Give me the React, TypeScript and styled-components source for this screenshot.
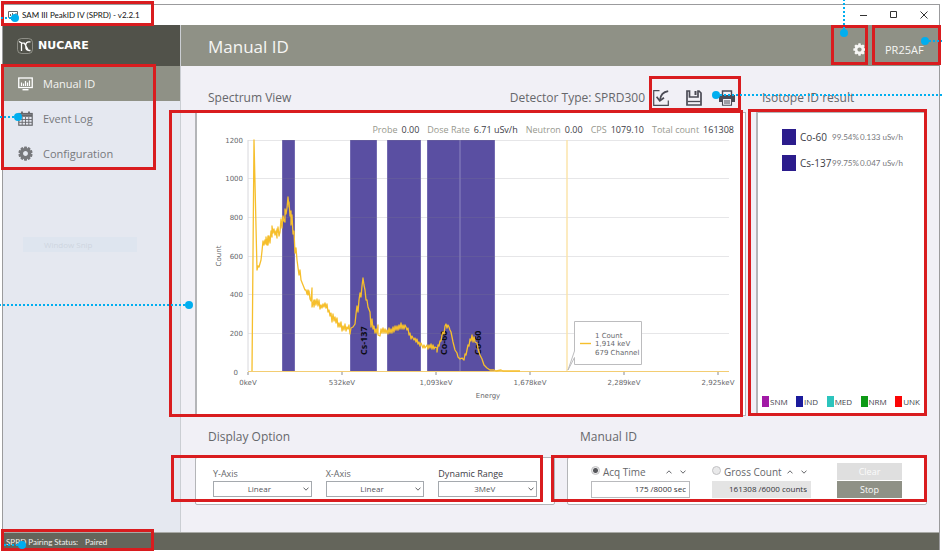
import React from "react";
import styled, { createGlobalStyle, css } from "styled-components";

const color = {
  olive: "#8f9186",
  oliveDark: "#51524a",
  status: "#64655b",
  side: "#e5e8f0",
  main: "#f1f0f6",
  text: "#66676b",
  dark: "#3c3c46",
  line: "#b4b5b8",
  band: "#5a4fa2",
  curve: "#f6bf2c",
  red: "#d91c1f",
  blue: "#00aeef",
};

const GlobalStyle = createGlobalStyle`
  *, *::before, *::after { box-sizing: border-box; }
  body { margin: 0; background: #fff; }
  body, button, input, select {
    font-family: "Open Sans", "Noto Sans", sans-serif;
  }
  button { border: 0; padding: 0; background: none; color: inherit; cursor: pointer; }
  h1, h2, p { margin: 0; font-weight: 400; }
`;

/* ---------- annotations ---------- */

const Frame = styled.div<{ $inset: string }>`
  position: absolute;
  inset: ${(p) => p.$inset};
  border: 3px solid ${color.red};
  pointer-events: none;
  z-index: 2;
`;

type Dir = "left" | "right" | "up";

const leader = {
  left: css<{ $len: number }>`
    right: 4px; top: 3px; width: ${(p) => p.$len}px; height: 2px;
    background: repeating-linear-gradient(to left, ${color.blue} 0 2px, transparent 2px 4px);
  `,
  right: css<{ $len: number }>`
    left: 4px; top: 3px; width: ${(p) => p.$len}px; height: 2px;
    background: repeating-linear-gradient(to right, ${color.blue} 0 2px, transparent 2px 4px);
  `,
  up: css<{ $len: number }>`
    left: 3px; bottom: 4px; height: ${(p) => p.$len}px; width: 2px;
    background: repeating-linear-gradient(to top, ${color.blue} 0 2px, transparent 2px 4px);
  `,
};

const Pin = styled.span<{ $at: string; $dir: Dir; $len: number }>`
  position: absolute;
  inset: ${(p) => p.$at};
  width: 8px;
  height: 8px;
  border-radius: 50%;
  background: ${color.blue};
  pointer-events: none;
  z-index: 3;
  &::after {
    content: "";
    position: absolute;
    ${(p) => leader[p.$dir]}
  }
`;

/* ---------- window ---------- */

const Page = styled.div`
  display: flex;
  min-height: 100vh;
  padding: 4px 2px 1px;
  overflow: clip;
`;

const Window = styled.div`
  flex: 1;
  min-width: 0;
  display: flex;
  flex-direction: column;
  border: 1px solid #9b9b9d;
  border-bottom: 0;
`;

const TitleBar = styled.header`
  display: flex;
  justify-content: space-between;
  height: 20px;
  background: #fff;
`;

const AppTitle = styled.div`
  position: relative;
  display: flex;
  align-items: center;
  gap: 4px;
  width: 151px;
  padding-left: 5px;
  font-family: Lato, "Open Sans", sans-serif;
  font-size: 8px;
  color: #111;
  white-space: nowrap;
`;

const WindowControls = styled.div`
  display: flex;
`;

const WindowButton = styled.button`
  display: grid;
  place-items: center;
  width: 30px;
`;

const Shell = styled.div`
  flex: 1;
  display: flex;
`;

const Sidebar = styled.aside`
  flex: none;
  width: 178px;
  border-right: 1px solid #cbced3;
  background: ${color.side};
`;

const Brand = styled.div`
  display: flex;
  align-items: center;
  gap: 5px;
  height: 41px;
  padding-left: 14px;
  background: ${color.oliveDark};
  color: #fff;
  font: bold 11px "DejaVu Sans", sans-serif;
`;

const Nav = styled.nav`
  position: relative;
  display: flex;
  flex-direction: column;
`;

const NavLink = styled.a<{ $active?: boolean }>`
  display: flex;
  align-items: center;
  gap: 10px;
  height: 35px;
  padding-left: 15px;
  font-size: 11px;
  text-decoration: none;
  color: ${(p) => (p.$active ? "#f4f4f2" : "#77787c")};
  background: ${(p) => (p.$active ? color.olive : "transparent")};
`;

const SnipGhost = styled.div`
  margin: 66px 43px 0 20px;
  padding-left: 21px;
  background: #dee5ef;
  color: #ced5df;
  font-size: 8px;
  line-height: 15px;
`;

const Main = styled.main`
  flex: 1;
  min-width: 0;
  display: flex;
  flex-direction: column;
  background: ${color.main};
`;

const Header = styled.div`
  display: flex;
  height: 41px;
  padding-left: 27px;
  background: ${color.olive};
  color: #f6f6f4;
`;

const PageTitle = styled.h1`
  flex: 1;
  align-self: center;
  padding-top: 2px;
  font-size: 17px;
  line-height: 24px;
`;

const HeaderButton = styled.button<{ $kind: "icon" | "user" }>`
  position: relative;
  display: flex;
  align-items: center;
  padding-top: 8px;
  font-size: 11px;
  ${(p) =>
    p.$kind === "icon"
      ? css`
          width: 37px;
          justify-content: flex-end;
          padding-right: 2px;
        `
      : css`
          width: 67px;
          margin-left: 4px;
          padding-left: 13px;
        `}
`;

const Content = styled.div`
  flex: 1;
  display: flex;
  flex-direction: column;
  padding: 0 12px 27px 14px;
`;

const UpperRow = styled.div`
  flex: 1;
  display: grid;
  grid-template-columns: minmax(0, 1fr) 171px;
  gap: 10px;
`;

const LowerRow = styled.div`
  display: grid;
  grid-template-columns: repeat(2, minmax(0, 1fr));
  gap: 12px;
`;

const Section = styled.section`
  display: flex;
  flex-direction: column;
`;

const SectionHead = styled.div<{ $size: "tall" | "short" }>`
  display: flex;
  align-items: center;
  height: ${(p) => (p.$size === "tall" ? 46 : 41)}px;
  padding: ${(p) => (p.$size === "tall" ? 17 : 0)}px 11px 0 13px;
  font-size: 12px;
  color: ${color.text};
  white-space: nowrap;
`;

const NarrowHead = styled(SectionHead)`
  padding-left: 6px;
`;

const Heading = styled.h2`
  flex: 1;
  font-size: 12px;
`;

const Toolbar = styled.div`
  position: relative;
  display: flex;
  align-items: center;
  gap: 17px;
  height: 29px;
  margin-left: 8px;
`;

const ToolButton = styled.button`
  display: grid;
  width: 16px;
  height: 16px;
  color: #4b4b55;
`;

const Panel = styled.div`
  position: relative;
  flex: 1;
  border: 1px solid ${color.line};
  border-left-width: 2px;
  background: #fff;
`;

const Metrics = styled.dl`
  display: flex;
  justify-content: flex-end;
  align-items: center;
  gap: 8px;
  height: 23px;
  margin: 0;
  padding: 9px 11px 0 0;
  font-size: 9px;
  white-space: nowrap;
`;

const Metric = styled.div`
  display: flex;
  gap: 4px;
  dt { color: #97988e; }
  dd { margin: 0; color: ${color.dark}; }
`;

const ChartSvg = styled.svg`
  display: block;
  width: 100%;
  height: auto;
  .axis { font: 7px "DejaVu Sans", Verdana, sans-serif; fill: #66676b; }
  .peak { font: bold 9px "Open Sans", sans-serif; fill: #0c0c14; }
`;

const ResultPanel = styled(Panel)`
  display: flex;
  flex-direction: column;
  justify-content: space-between;
`;

const ResultTable = styled.table`
  margin: 11px 0 0 24px;
  border-collapse: collapse;
  table-layout: fixed;
  width: 120px;
  color: #77787c;
  font-family: Lato, "Open Sans", sans-serif;
  font-size: 8px;
  td, th { height: 26px; padding: 0; font-weight: 400; white-space: nowrap; }
  td:first-child { width: 18px; }
  td:nth-child(3) { width: 28px; }
  td:last-child { width: 42px; text-align: right; }
`;

const IsotopeName = styled.th`
  text-align: left;
  color: ${color.dark};
  font-family: "Open Sans", sans-serif;
  font-size: 10px;
`;

const Swatch = styled.span<{ $color: string; $big?: boolean }>`
  display: block;
  width: ${(p) => (p.$big ? 14 : 7)}px;
  height: ${(p) => (p.$big ? 16 : 11)}px;
  background: ${(p) => p.$color};
`;

const Legend = styled.ul`
  display: flex;
  justify-content: space-between;
  margin: 0;
  padding: 0 6px 8px 4px;
  list-style: none;
  font-size: 8px;
  line-height: 11px;
  color: #44454c;
  li { display: flex; gap: 1px; }
`;

const OptionPanel = styled.div`
  position: relative;
  display: flex;
  height: 48px;
  border: 1px solid ${color.line};
  border-radius: 2px;
  background: #fff;
`;

const DisplayOptions = styled(OptionPanel)`
  gap: 14px;
  padding: 9px 17px 0 17px;
`;

const Field = styled.label<{ $strong?: boolean }>`
  display: flex;
  flex-direction: column;
  width: 99px;
  font-size: 9px;
  line-height: 14px;
  color: ${(p) => (p.$strong ? color.dark : color.text)};
`;

const SelectWrap = styled.span`
  display: grid;
  align-items: center;
  grid-template-columns: minmax(0, 1fr);
  > * { grid-area: 1 / 1; }
  svg { justify-self: end; margin-right: 3px; pointer-events: none; }
`;

const Select = styled.select`
  appearance: none;
  height: 16px;
  padding: 0 12px 1px 6px;
  border: 1px solid #a5a9ae;
  border-radius: 0;
  background: #fff;
  color: #55565c;
  font-size: 8px;
  text-align: center;
  text-align-last: center;
`;

const ManualOptions = styled(OptionPanel)`
  padding: 5px 24px 0 23px;
`;

const Limit = styled.div`
  width: 99px;
  margin-right: 22px;
`;

const LimitHead = styled.div`
  display: flex;
  align-items: center;
  height: 18px;
  font-size: 10px;
  color: ${color.text};
  white-space: nowrap;
  label { flex: 1; }
`;

const Radio = styled.input`
  appearance: none;
  width: 9px;
  height: 9px;
  margin: 0 3px 4px 0;
  border: 1px solid #c2c2c4;
  border-radius: 50%;
  background: #e9e9ea;
  &:checked {
    background: radial-gradient(circle, #55565a 0 2px, #e9e9ea 3px);
  }
`;

const StepButton = styled.button`
  display: grid;
  place-items: center;
  width: 14px;
  height: 14px;
  color: #55565c;
`;

const LimitInput = styled.input<{ $muted?: boolean }>`
  display: block;
  width: 100%;
  height: 17px;
  padding: 0 3px 2px;
  border: 1px solid ${(p) => (p.$muted ? "#e4e4e4" : "#b9babd")};
  background: ${(p) => (p.$muted ? "#e4e4e4" : "#fff")};
  color: #33343a;
  font-size: 8px;
  text-align: right;
`;

const Actions = styled.div`
  display: flex;
  flex-direction: column;
  gap: 1px;
  width: 65px;
  margin-left: auto;
`;

const ActionButton = styled.button<{ $tone: "idle" | "active" }>`
  height: 17px;
  background: ${(p) => (p.$tone === "idle" ? "#dfdfdf" : color.olive)};
  color: #fbfbfb;
  font-size: 9px;
  line-height: 12px;
`;

const StatusBar = styled.footer`
  height: 18px;
  border-top: 1px solid #a9aaa6;
  background: ${color.status};
`;

const StatusText = styled.p`
  position: relative;
  display: flex;
  align-items: center;
  gap: 7px;
  width: 151px;
  height: 17px;
  padding-left: 3px;
  font-family: Lato, "Open Sans", sans-serif;
  font-size: 8px;
  color: #f0f0ee;
  white-space: nowrap;
`;

/* ---------- icons ---------- */

const AppIcon = () => (
  <svg width="10" height="9" viewBox="0 0 10 9" fill="none" stroke="#66676b">
    <path d="M.5.5h9v6h-9zM3 8.5h4M2.5 5V3M4.5 5V2M6.5 5V3M8 5V2" />
  </svg>
);

const BrandMark = () => (
  <svg width="16" height="16" viewBox="0 0 16 16" fill="none" stroke="#fff">
    <rect x=".5" y=".5" width="15" height="15" rx="4" strokeWidth=".7" stroke="#a9a9a2" />
    <path d="M2 3.5 4.500 4.800V13M4.500 5.200h2.800L11.500 12.500M13.500 3.800h-1.500c-2.200 0-3.200 1-3.200 3.200v1.800c0 2.500 1.200 3.700 3.200 3.700h1.500" strokeWidth="1.3" />
  </svg>
);

const MonitorIcon = () => (
  <svg width="15" height="14" viewBox="0 0 15 14" fill="none" stroke="#fff">
    <rect x=".75" y="1" width="13.5" height="9.5" strokeWidth="1.3" />
    <path d="M3.5 9V5.5M5.5 9V6.5M7.5 9V4M9.5 9V5.5M11.5 9V3.5" strokeWidth="1.2" />
    <path d="M4.5 12.7h6" strokeWidth="1.4" />
  </svg>
);

const CalendarIcon = () => (
  <svg width="15" height="15" viewBox="0 0 15 15" fill="none" stroke="#66676b">
    <rect x=".8" y="2.5" width="13.4" height="11.7" strokeWidth="1.2" />
    <path d="M1 4.5h13" strokeWidth="2.6" />
    <path d="M4 .5V3M11 .5V3" strokeWidth="1.8" />
    <path d="M4.2 6v8M7.5 6v8M10.8 6v8M1 8.5h13M1 11.3h13" strokeWidth=".9" />
  </svg>
);

const Gear = ({ size, teeth }: { size: number; teeth: number }) => (
  <svg width={size} height={size} viewBox="-8 -8 16 16" fill="currentColor">
    <circle r="4.3" fill="none" stroke="currentColor" strokeWidth="3.4" />
    {Array.from({ length: teeth }, (_, i) => (
      <rect key={i} x="-1.6" y="-7.6" width="3.2" height="3" rx=".8" transform={`rotate(${(i * 360) / teeth})`} />
    ))}
  </svg>
);

const ImportIcon = () => (
  <svg width="16" height="16" viewBox="0 0 16 16" fill="none" stroke="currentColor">
    <path d="M6.500.7H.7v14.600h14.600V10.500" strokeWidth="1.2" />
    <path d="M15.200 1.200C10.500 2 7.500 5 7 10" strokeWidth="1.8" />
    <path d="M3.600 6.800 6.800 10.800l4.200-3" strokeWidth="1.700" />
  </svg>
);

const SaveIcon = () => (
  <svg width="16" height="16" viewBox="0 0 16 16" fill="none" stroke="currentColor">
    <path d="M1 1h2.500v6h8.500V1h1L15 3V15H1z" strokeWidth="1.700" />
    <path d="M1.500 11.500h13" strokeWidth="1.300" />
    <path d="M9.500 1v4" strokeWidth="2" />
  </svg>
);

const PrintIcon = () => (
  <svg width="16" height="16" viewBox="0 0 16 16" fill="none" stroke="currentColor">
    <path d="M3.5 5V1h9v4" strokeWidth="1.4" />
    <path d="M0 5h16v7h-3.5V9h-9v3H0z" fill="currentColor" stroke="none" />
    <path d="M3.5 9v6.2h9V9M5 11h6M5 13h6" strokeWidth="1.1" />
  </svg>
);

const Chevron = ({ up }: { up?: boolean }) => (
  <svg width="6" height="4" viewBox="0 0 6 4" fill="none" stroke="#66676b">
    <path d={up ? "M.5 3.4 3 .8l2.5 2.6" : "M.5.6 3 3.2 5.5.6"} />
  </svg>
);

/* ---------- chart ---------- */

const bands = [
  [282, 295],
  [350, 377],
  [387, 421],
  [427, 460],
  [460, 495],
];

const curve =
  "252,371 254,140 257,270 258,266 259,267 261,260 262,251 263,241 264,245 265,240 266,244 266,237 267,245 268,236 268,245 269,236 270,243 271,231 272,237 272,226 273,233 274,229 275,235 276,231 277,238 277,229 278,232 278,227 279,236 280,232 281,219 282,228 283,216 284,221 285,222 285,209 286,214 287,208 288,197 289,207 289,202 290,216 291,211 291,225 292,215 293,234 294,231 295,253 296,248 297,260 299,275 300,270 301,280 303,285 305,290 306,290 307,294 308,290 308,295 309,291 310,299 311,301 312,288 312,307 314,300 314,307 315,300 316,305 317,299 318,306 319,300 320,309 321,305 322,308 323,304 324,307 325,303 326,308 327,304 328,312 329,310 330,316 331,313 332,322 333,314 334,321 335,317 336,323 337,318 338,327 339,323 340,327 341,322 342,331 343,326 344,330 345,324 346,331 347,327 348,329 349,325 350,334 351,328 353,327 355,324 356,314 357,306 358,312 359,300 360,293 361,297 362,286 363,278 364,285 365,290 366,300 367,300 368,307 370,312 371,327 372,319 373,329 374,326 375,333 376,329 377,333 378,325 378,335 380,336 381,329 382,333 383,328 384,333 385,329 386,333 387,330 388,334 389,328 390,333 391,329 392,333 393,327 394,332 395,326 396,330 397,326 398,330 399,325 400,329 401,323 402,329 403,325 404,329 405,325 406,327 407,330 408,328 409,335 410,333 411,339 412,336 414,340 415,338 416,342 417,339 418,344 419,342 420,346 421,343 423,348 424,345 425,348 427,345 428,349 429,345 430,348 431,344 432,349 433,345 434,349 435,347 437,348 437,352 438,345 439,346 440,341 441,341 442,335 443,332 444,334 445,326 446,324 447,328 448,325 449,327 450,330 451,332 453,342 455,350 457,353 458,357 460,359 462,358 464,360 465,354 466,355 468,345 469,346 470,339 471,341 472,335 473,342 474,337 475,342 477,343 478,349 480,355 482,359 484,365 487,368 490,370 494,370 496,371 501,370 503,371 520,371";

const xTicks: [number, string][] = [
  [248, "0keV"],
  [342, "532keV"],
  [436, "1,093keV"],
  [530, "1,678keV"],
  [624, "2,289keV"],
  [718, "2,925keV"],
];

const yFor = (count: number) => Math.round(371.5 - (count / 1200) * 232);

const SpectrumChart = () => (
  <ChartSvg viewBox="197 136 548 279" role="img" aria-label="Energy spectrum">
    {bands.map(([a, b]) => (
      <g key={a}>
        <rect x={a} y="140" width={b - a} height="231" fill={color.band} />
        <path d={`M${a + 0.5} 140V371M${b - 0.5} 140V371`} stroke="#7e76b8" strokeOpacity=".7" />
      </g>
    ))}
    {[1200, 1000, 800, 600, 400, 200, 0].map((v) => (
      <g key={v}>
        {v > 0 && <path d={`M248 ${yFor(v) + 0.5}H729`} stroke="#80808a" strokeOpacity=".2" />}
        <text className="axis" x={v ? 243 : 238} y={yFor(v) + 3} textAnchor="end">
          {v}
        </text>
      </g>
    ))}
    <path d="M248 140V371" stroke="#d8d8dc" />
    {xTicks.map(([x, label]) => (
      <g key={label}>
        <path d={`M${x} 372v3`} stroke="#8a8a8e" />
        <text className="axis" x={x} y="385" textAnchor="middle">
          {label}
        </text>
      </g>
    ))}
    <text className="axis" x="488" y="398" textAnchor="middle">Energy</text>
    <text className="axis" transform="translate(221 256) rotate(-90)" textAnchor="middle">Count</text>
    <text className="peak" transform="translate(367 355) rotate(-90)">Cs-137</text>
    <text className="peak" transform="translate(447 355) rotate(-90)">Co-60</text>
    <text className="peak" transform="translate(481 355) rotate(-90)">Co-60</text>
    <path d="M567 140V371" stroke="#fbe3a6" strokeWidth="1.4" />
    <path d="M248 371.5H729" stroke="#f3cd72" />
    <polyline points={curve} fill="none" stroke={color.curve} strokeWidth="1.3" strokeLinejoin="round" />
    <path d="M574.5 321.5h67v43h-67v-7L568 370l6.5-19z" fill="#fff" stroke="#bcbcbe" />
    <path d="M580 343.5h11" stroke={color.curve} strokeWidth="1.4" />
    <text className="axis" x="595" y="338">1 Count</text>
    <text className="axis" x="595" y="346">1,914 keV</text>
    <text className="axis" x="595" y="355">679 Channel</text>
  </ChartSvg>
);

/* ---------- data ---------- */

const metrics = [
  ["Probe", "0.00"],
  ["Dose Rate", "6.71 uSv/h"],
  ["Neutron", "0.00"],
  ["CPS", "1079.10"],
  ["Total count", "161308"],
];

const results = [
  ["Co-60", "99.54%", "0.133 uSv/h"],
  ["Cs-137", "99.75%", "0.047 uSv/h"],
];

const legend = [
  ["SNM", "#a21aa6"],
  ["IND", "#1b1b9c"],
  ["MED", "#2cc4bd"],
  ["NRM", "#0e9a16"],
  ["UNK", "#fb0505"],
];

const selects = [
  ["Y-Axis", "Linear", "Logarithmic"],
  ["X-Axis", "Linear", "Square root"],
  ["Dynamic Range", "3MeV", "1.5MeV"],
];

const LimitField = ({ id, label, value, checked }: { id: string; label: string; value: string; checked?: boolean }) => (
  <Limit>
    <LimitHead>
      <Radio type="radio" name="limit" id={id} defaultChecked={checked} />
      <label htmlFor={id}>{label}</label>
      <StepButton aria-label={`Increase ${label}`}><Chevron up /></StepButton>
      <StepButton aria-label={`Decrease ${label}`}><Chevron /></StepButton>
    </LimitHead>
    <LimitInput aria-label={label} defaultValue={value} $muted={!checked} />
  </Limit>
);

export default function App() {
  return (
    <Page>
      <GlobalStyle />
      <Window>
        <TitleBar>
          <AppTitle>
            <AppIcon />
            SAM III PeakID IV (SPRD) - v2.2.1
            <Frame $inset="-4px 0 -1px -2px" />
            <Pin $at="9px auto auto 8px" $dir="left" $len={16} />
          </AppTitle>
          <WindowControls>
            <WindowButton aria-label="Minimize">
              <svg width="8" height="8" stroke="#333"><path d="M0 4.5h7" /></svg>
            </WindowButton>
            <WindowButton aria-label="Maximize">
              <svg width="8" height="8" fill="none" stroke="#333"><path d="M.5.5h6v6h-6z" /></svg>
            </WindowButton>
            <WindowButton aria-label="Close">
              <svg width="8" height="8" stroke="#333"><path d="M.5.5l7 7M7.5.5l-7 7" /></svg>
            </WindowButton>
          </WindowControls>
        </TitleBar>
        <Shell>
          <Sidebar>
            <Brand>
              <BrandMark />
              NUCARE
            </Brand>
            <Nav>
              <NavLink href="#manual" $active><MonitorIcon />Manual ID</NavLink>
              <NavLink href="#events"><CalendarIcon />Event Log</NavLink>
              <NavLink href="#config"><Gear size={15} teeth={10} />Configuration</NavLink>
              <Frame $inset="-2px 24px 1px -2px" />
              <Pin $at="47px auto auto 11px" $dir="left" $len={18} />
            </Nav>
            <SnipGhost>Window Snip</SnipGhost>
          </Sidebar>
          <Main>
            <Header>
              <PageTitle>Manual ID</PageTitle>
              <HeaderButton $kind="icon" aria-label="Settings">
                <Gear size={13} teeth={8} />
                <Frame $inset="0 0 1px 0" />
                <Pin $at="4px auto auto 9px" $dir="up" $len={34} />
              </HeaderButton>
              <HeaderButton $kind="user">
                PR25AF
                <Frame $inset="0 -2px 1px 0" />
                <Pin $at="12px auto auto 49px" $dir="right" $len={18} />
              </HeaderButton>
            </Header>
            <Content>
              <UpperRow>
                <Section>
                  <SectionHead $size="tall">
                    <Heading>Spectrum View</Heading>
                    <span>Detector Type: SPRD300</span>
                    <Toolbar>
                      <ToolButton aria-label="Import"><ImportIcon /></ToolButton>
                      <ToolButton aria-label="Save"><SaveIcon /></ToolButton>
                      <ToolButton aria-label="Print"><PrintIcon /></ToolButton>
                      <Frame $inset="-7px -6px 1px -4px" />
                      <Pin $at="8px auto auto 59px" $dir="right" $len={228} />
                    </Toolbar>
                  </SectionHead>
                  <Panel>
                    <Metrics>
                      {metrics.map(([k, v]) => (
                        <Metric key={k}><dt>{k}</dt><dd>{v}</dd></Metric>
                      ))}
                    </Metrics>
                    <SpectrumChart />
                    <Frame $inset="-3px 2px -2px -28px" />
                    <Pin $at="188px auto auto -12px" $dir="left" $len={190} />
                  </Panel>
                </Section>
                <Section>
                  <NarrowHead $size="tall"><Heading>Isotope ID result</Heading></NarrowHead>
                  <ResultPanel>
                    <ResultTable>
                      <tbody>
                        {results.map(([name, share, dose]) => (
                          <tr key={name}>
                            <td><Swatch $color="#2b1c8c" $big /></td>
                            <IsotopeName scope="row">{name}</IsotopeName>
                            <td>{share}</td>
                            <td>{dose}</td>
                          </tr>
                        ))}
                      </tbody>
                    </ResultTable>
                    <Legend>
                      {legend.map(([name, c]) => (
                        <li key={name}><Swatch $color={c} />{name}</li>
                      ))}
                    </Legend>
                    <Frame $inset="-4px -1px -1px -10px" />
                  </ResultPanel>
                </Section>
              </UpperRow>
              <LowerRow>
                <Section>
                  <SectionHead $size="short"><Heading>Display Option</Heading></SectionHead>
                  <DisplayOptions>
                    {selects.map(([label, value, other], i) => (
                      <Field key={label} $strong={i === 2}>
                        {label}
                        <SelectWrap>
                          <Select defaultValue={value}>
                            <option>{value}</option>
                            <option>{other}</option>
                          </Select>
                          <Chevron />
                        </SelectWrap>
                      </Field>
                    ))}
                    <Frame $inset="-3px 11px 2px -25px" />
                  </DisplayOptions>
                </Section>
                <Section>
                  <SectionHead $size="short"><Heading>Manual ID</Heading></SectionHead>
                  <ManualOptions>
                    <LimitField id="acq" label="Acq Time" value="175 /8000 sec" checked />
                    <LimitField id="gross" label="Gross Count" value="161308 /6000 counts" />
                    <Actions>
                      <ActionButton $tone="idle">Clear</ActionButton>
                      <ActionButton $tone="active">Stop</ActionButton>
                    </Actions>
                    <Frame $inset="-3px -1px 2px -17px" />
                  </ManualOptions>
                </Section>
              </LowerRow>
            </Content>
          </Main>
        </Shell>
        <StatusBar>
          <StatusText>
            <span>SPRD Pairing Status:</span>
            <span>Paired</span>
            <Frame $inset="-4px 0 -1px -2px" />
            <Pin $at="8px auto auto 15px" $dir="left" $len={18} />
          </StatusText>
        </StatusBar>
      </Window>
    </Page>
  );
}
